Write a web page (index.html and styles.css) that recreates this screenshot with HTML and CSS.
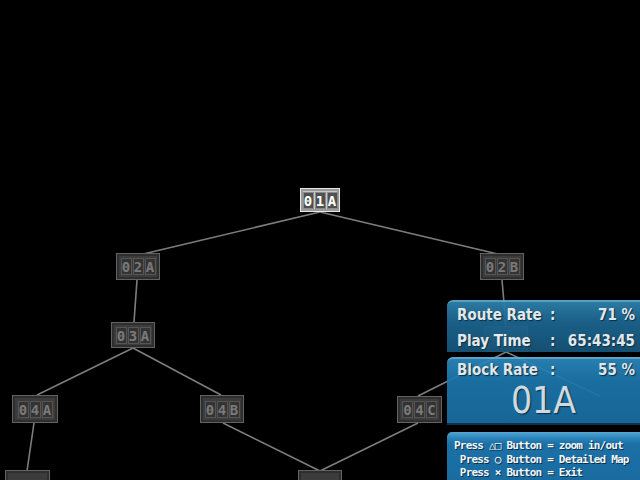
FILE: index.html
```html
<!DOCTYPE html>
<html>
<head lang="en">
    <meta charset="UTF-8">
    <title>Route Map</title>
    <link rel="stylesheet" href="styles.css">
</head>
<body>
<div class="screen">
    <svg class="links" width="640" height="480" viewBox="0 0 640 480">
        <g stroke="#7d7d7d" stroke-width="1.6" fill="none">
            <line x1="320" y1="212" x2="139" y2="255"/>
            <line x1="320" y1="212" x2="502" y2="255"/>
            <line x1="137" y1="280" x2="134" y2="322"/>
            <line x1="133" y1="348" x2="37" y2="395"/>
            <line x1="133" y1="348" x2="221" y2="395"/>
            <line x1="34" y1="423" x2="27" y2="471"/>
            <line x1="223" y1="423" x2="320" y2="471"/>
            <line x1="418" y1="423" x2="320" y2="471"/>
            <line x1="418" y1="396" x2="506" y2="352"/>
            <line x1="502" y1="280" x2="506" y2="326"/>
            <line x1="506" y1="352" x2="600" y2="396"/>
        </g>
    </svg>

    <div class="node on n01a"><span>0</span><span>1</span><span>A</span></div>
    <div class="node n02a"><span>0</span><span>2</span><span>A</span></div>
    <div class="node n02b"><span>0</span><span>2</span><span>B</span></div>
    <div class="node n03a"><span>0</span><span>3</span><span>A</span></div>
    <div class="node n03b"></div>
    <div class="node n04a"><span>0</span><span>4</span><span>A</span></div>
    <div class="node n04b"><span>0</span><span>4</span><span>B</span></div>
    <div class="node n04c"><span>0</span><span>4</span><span>C</span></div>
    <div class="node n05a"></div>
    <div class="node n05b"></div>

    <div class="panel">
        <div class="stats">
            <div class="row"><span class="label">Route Rate</span><span class="colon">:</span><span class="value">71 %</span></div>
            <div class="row"><span class="label">Play Time</span><span class="colon">:</span><span class="value">65:43:45</span></div>
        </div>
        <div class="block">
            <div class="row"><span class="label">Block Rate</span><span class="colon">:</span><span class="value">55 %</span></div>
            <div class="area">01A</div>
        </div>
        <div class="help">
            <div class="line">Press △□ Button = zoom in/out</div>
            <div class="line"> Press ○ Button = Detailed Map</div>
            <div class="line"> Press × Button = Exit</div>
        </div>
    </div>
</div>
</body>
</html>
```

FILE: styles.css
```css
*{
    margin: 0;
    padding: 0;
    box-sizing: border-box;
}
html,body{
    width: 640px;
    height: 480px;
    background: #000;
    overflow: hidden;
}
.screen{
    position: relative;
    width: 640px;
    height: 480px;
    background: #000;
}
.links{
    position: absolute;
    left: 0;
    top: 0;
}

/* map nodes */
.node{
    position: absolute;
    width: 44px;
    height: 27px;
    background: #3c3c3c;
    border: 1px solid #626262;
    box-shadow: inset 0 0 0 2px #2e2e2e;
    display: flex;
    justify-content: center;
    align-items: center;
    gap: 1px;
    font-family: "DejaVu Sans Mono", monospace;
    font-weight: bold;
    font-size: 14px;
    color: #7a7a7a;
}
.node span{
    display: block;
    width: 11px;
    height: 17px;
    line-height: 17px;
    text-align: center;
    background: #333;
    border: 1px solid #555;
}
.node.on{
    background: #c9c9c9;
    border: 1px solid #e6e6e6;
    box-shadow: inset 0 0 0 2px #9a9a9a;
    color: #fff;
}
.node.on span{
    background: #505050;
    border-color: #8a8a8a;
}
.n01a{ left: 300px; top: 188px; width: 40px; height: 24px; }
.n02a{ left: 116px; top: 253px; }
.n02b{ left: 480px; top: 253px; }
.n03a{ left: 111px; top: 322px; height: 26px; }
.n03b{ left: 484px; top: 326px; height: 26px; }
.n04a{ left: 12px; top: 395px; width: 46px; height: 28px; }
.n04b{ left: 200px; top: 395px; height: 28px; }
.n04c{ left: 397px; top: 396px; width: 45px; }
.n05a{ left: 5px; top: 470px; width: 45px; height: 20px; }
.n05b{ left: 298px; top: 470px; height: 20px; }

/* info panel */
.panel{
    position: absolute;
    left: 447px;
    top: 300px;
    width: 193px;
    height: 180px;
    display: flex;
    flex-direction: column;
    font-family: "DejaVu Sans Condensed", "DejaVu Sans", sans-serif;
    font-weight: bold;
    color: #f2f7fa;
    text-shadow: 1px 1px 1px #0b3048;
}
.stats{
    height: 52px;
    padding: 2px 5px 0 10px;
    border-radius: 6px 0 0 0;
    border-top: 2px solid #5ea8cc;
    background: linear-gradient(#2f82ad, #1c6590 40%, #175579);
    opacity: 0.94;
    display: flex;
    flex-direction: column;
    gap: 3px;
}
.row{
    display: flex;
    align-items: center;
    height: 24px;
    font-size: 15px;
}
.label{
    width: 93px;
}
.colon{
    width: 14px;
}
.value{
    flex: 1;
    text-align: right;
}
.block{
    margin-top: 5px;
    height: 68px;
    padding: 0 5px 0 10px;
    border-radius: 6px 0 0 0;
    border-top: 2px solid #63afd6;
    border-bottom: 2px solid #0c3654;
    background: linear-gradient(#2a88bd, #1c76ac 35%, #1a6ea3);
    opacity: 0.93;
}
.block .row{
    height: 22px;
}
.area{
    height: 40px;
    line-height: 40px;
    text-align: center;
    font-size: 37px;
    font-weight: normal;
    color: #dfeaf1;
    padding-right: 5px;
}
.help{
    margin-top: 7px;
    flex: 1;
    padding: 7px 0 0 7px;
    border-radius: 5px 0 0 0;
    background: linear-gradient(#56a6d2, #2a84bb 6px, #1b70a6 12px, #1a6ca0);
    font-family: "DejaVu Sans Mono", monospace;
    font-weight: bold;
    font-size: 11px;
    letter-spacing: -0.8px;
    text-shadow: 1px 1px 0 #0b2f48;
}
.line{
    height: 13.5px;
    line-height: 13.5px;
    white-space: pre;
}
```
